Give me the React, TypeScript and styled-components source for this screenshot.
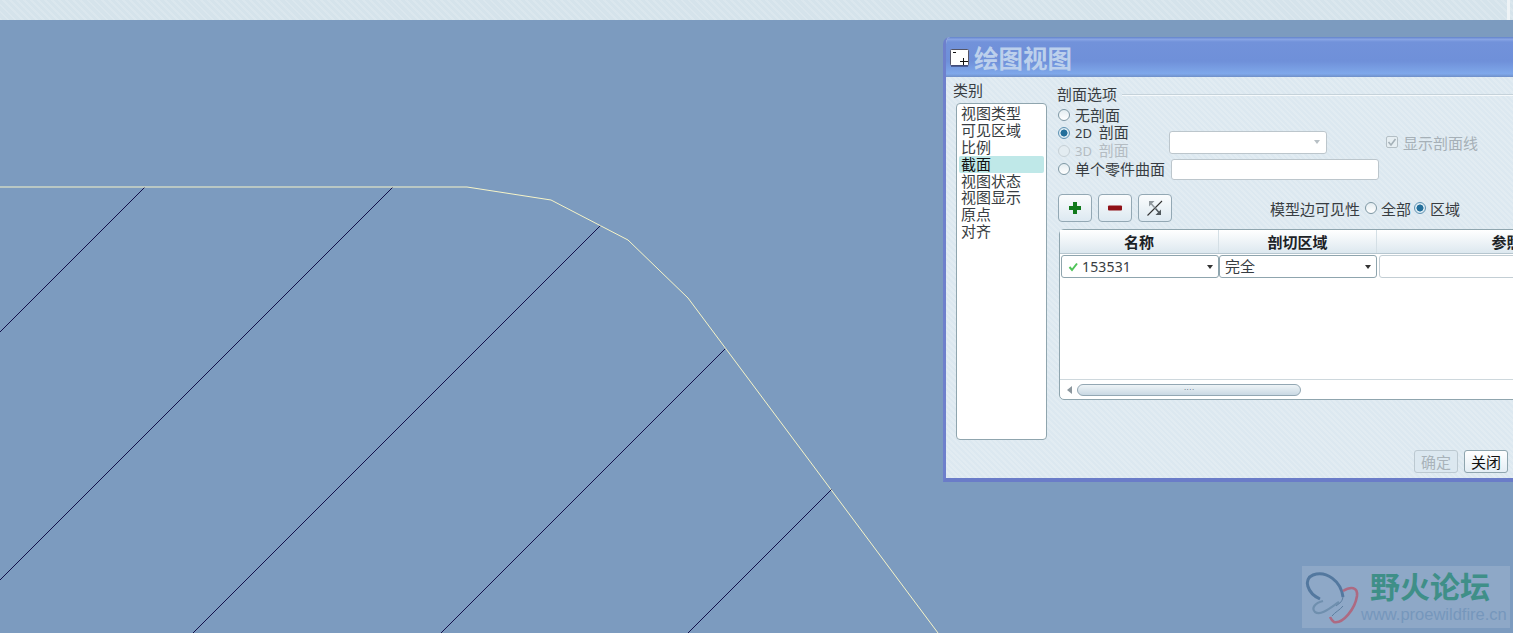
import React from "react";
import styled, { createGlobalStyle } from "styled-components";

const Global = createGlobalStyle`
  html, body { margin: 0; padding: 0; }
  body { font-family: "Noto Sans CJK SC", "Liberation Sans", sans-serif; overflow: hidden; }
  * { box-sizing: border-box; }
`;

const Page = styled.div`
  width: 1513px;
  height: 633px;
  display: flex;
  flex-direction: column;
  overflow: hidden;
  background: #7c9bbf;
`;

const TopBar = styled.div`
  height: 20px;
  flex: none;
  display: flex;
  justify-content: flex-end;
  background-color: #d5e3eb;
  background-image: repeating-linear-gradient(45deg, rgba(255,255,255,.14) 0 2px, transparent 2px 5px);
`;

const TopBarEdge = styled.div`
  width: 3px;
  margin-right: 3px;
  background: #eef3f6;
`;

const Canvas = styled.div`
  position: relative;
  flex: 1;
  overflow: hidden;
`;

const Drawing = styled.svg`
  display: block;
  width: 1513px;
  height: 613px;
`;

const Dialog = styled.div`
  position: absolute;
  left: 943px;
  top: 17px;
  right: 0;
  height: 445px;
  display: flex;
  flex-direction: column;
  overflow: hidden;
  border-left: 3px solid #6e80cc;
  border-bottom: 4px solid #6a7cc8;
  border-top-left-radius: 7px;
  color: #383d42;
  font-size: 15px;
  line-height: 17px;
  background-color: #dce8f0;
  background-image: repeating-linear-gradient(45deg, rgba(255,255,255,.16) 0 2px, transparent 2px 4px);
`;

const TitleBar = styled.div`
  height: 40px;
  flex: none;
  display: flex;
  align-items: center;
  gap: 5px;
  padding-left: 4px;
  background: linear-gradient(#6a8ad0 0, #6a8ad0 1px, #8ba7e6 2px, #7292da 5px, #6f90d9 60%, #7fa8ea 92%, #6f8fc8 100%);
`;

const TitleIcon = styled.svg`
  flex: none;
  margin-bottom: -2px;
`;

const TitleText = styled.span`
  margin-top: 2px;
  color: #bcd0ec;
  font-size: 24.500px;
  font-weight: 700;
  line-height: 30px;
`;

const Body = styled.div`
  flex: 1;
  min-height: 0;
  display: flex;
`;

const CategoryColumn = styled.div`
  flex: none;
  width: 101px;
  padding: 5px 0 0 7px;
`;

const CategoryLabel = styled.div`
  height: 21px;
  line-height: 15px;
`;

const CategoryList = styled.ul`
  list-style: none;
  margin: 0 0 0 3px;
  padding: 1px 2px;
  width: 91px;
  height: 337px;
  background: #fff;
  border: 1px solid #8fa5ae;
  border-radius: 4px;
`;

const CategoryItem = styled.li<{ $selected?: boolean }>`
  height: 16.900px;
  line-height: 15px;
  padding-left: 2px;
  color: ${p => (p.$selected ? "#111" : "#383d42")};
  background: ${p => (p.$selected ? "#bfe8e8" : "transparent")};
  border-radius: 2px;
`;

const Main = styled.div`
  flex: none;
  width: 640px;
  margin-left: 10px;
  padding-top: 9px;
`;

const SectionHeader = styled.div`
  display: flex;
  align-items: center;
  gap: 5px;
  height: 18px;
  margin-bottom: 2px;
  &::after {
    content: "";
    flex: 1;
    height: 2px;
    background: linear-gradient(#c5d2da 50%, #f6fafc 50%);
  }
`;

const SectionLabel = styled.span`
  line-height: 15px;
  margin-bottom: 4px;
`;

const OptionGrid = styled.div`
  display: grid;
  grid-template-columns: 112px 217px auto;
  grid-template-rows: repeat(4, 18px);
`;

const RadioRow = styled.label<{ $disabled?: boolean; $row: number }>`
  grid-column: 1;
  grid-row: ${p => p.$row};
  display: flex;
  align-items: center;
  gap: 5px;
  white-space: pre;
  color: ${p => (p.$disabled ? "#b4bcc2" : "inherit")};
`;

const RowText = styled.span`
  line-height: 15px;
  padding-bottom: 2px;
`;

const Digits = styled.span`
  font-family: "Noto Sans", sans-serif;
  font-size: 13px;
`;

const Radio = styled.span<{ $checked?: boolean; $disabled?: boolean }>`
  flex: none;
  width: 12px;
  height: 12px;
  margin-left: 1px;
  border-radius: 50%;
  border: 1px solid ${p => (p.$checked ? "#5f93b3" : p.$disabled ? "#c6d0d6" : "#7f98a4")};
  background: ${p =>
    p.$checked
      ? "radial-gradient(circle, #236f9b 0 3.200px, #dcebf3 3.800px)"
      : p.$disabled
      ? "#e3ecf1"
      : "linear-gradient(#e4edf1, #fff)"};
`;

const SelectBox = styled.div`
  grid-column: 2;
  grid-row: 2 / 4;
  align-self: center;
  width: 158px;
  height: 23px;
  display: flex;
  align-items: center;
  justify-content: flex-end;
  padding-right: 6px;
  background: #fff;
  border: 1px solid #bcc6cc;
  border-radius: 3px;
`;

const Caret = styled.span<{ $dim?: boolean }>`
  width: 0;
  height: 0;
  border-left: 3.500px solid transparent;
  border-right: 3.500px solid transparent;
  border-top: 4px solid ${p => (p.$dim ? "#b8c0c5" : "#333")};
`;

const CheckLabel = styled.label`
  grid-column: 3;
  grid-row: 2 / 4;
  align-self: center;
  display: flex;
  align-items: center;
  gap: 5px;
  color: #a6b0b7;
  white-space: nowrap;
`;

const CheckBox = styled.span`
  width: 12px;
  height: 12px;
  display: flex;
  align-items: center;
  justify-content: center;
  border: 1px solid #b4bfc5;
  border-radius: 2px;
  background: #e6eef2;
`;

const TextInput = styled.div`
  grid-column: 2 / 4;
  grid-row: 4;
  align-self: center;
  margin-left: 2px;
  width: 208px;
  height: 21px;
  background: #fff;
  border: 1px solid #bcc6cc;
  border-radius: 3px;
`;

const Toolbar = styled.div`
  display: flex;
  align-items: center;
  margin: 16px 0 0 1px;
  height: 28px;
`;

const IconButton = styled.button`
  width: 34px;
  height: 28px;
  padding: 0;
  margin-right: 6px;
  display: flex;
  align-items: center;
  justify-content: center;
  background: linear-gradient(#fafcfd, #dde9f1);
  border: 1px solid #93a8b4;
  border-radius: 4px;
`;

const Visibility = styled.div`
  margin-left: 92px;
  display: flex;
  align-items: center;
  white-space: nowrap;
`;

const VisibilityOption = styled.span`
  display: flex;
  align-items: center;
  gap: 4px;
  margin-left: 4px;
  & + & {
    margin-left: 2px;
  }
`;

const Table = styled.div`
  width: 640px;
  height: 171px;
  margin: 7px 0 0 2px;
  display: flex;
  flex-direction: column;
  background: #fff;
  border: 1px solid #8fa5ae;
  border-radius: 5px;
`;

const TableHeader = styled.div`
  height: 24px;
  flex: none;
  display: grid;
  grid-template-columns: 159px 158px 260px;
  background: linear-gradient(#fff, #dde8ef);
  border-bottom: 1px solid #b6c6cf;
`;

const HeaderCell = styled.div`
  text-align: center;
  font-weight: 700;
  line-height: 23px;
  color: #1c2226;
  border-right: 1px solid #d4dfe5;
`;

const TableBody = styled.div`
  flex: 1;
  display: grid;
  grid-template-columns: 158px 158px 1fr;
  grid-auto-rows: 23px;
  padding: 1px 0 0 1px;
`;

const Dropdown = styled.div`
  display: flex;
  align-items: center;
  gap: 3px;
  height: 23px;
  padding: 0 5px 0 6px;
  background: #fff;
  border: 1px solid #8fa5ae;
  border-radius: 3px;
`;

const DropdownText = styled.span`
  flex: 1;
  line-height: 15px;
  margin-left: -1px;
  padding-bottom: 2px;
`;

const Numeric = styled.span`
  flex: 1;
  line-height: 17px;
  font-family: "Noto Sans", sans-serif;
  font-size: 14px;
  letter-spacing: .15px;
`;

const BlankField = styled.div`
  height: 23px;
  margin-left: 2px;
  border: 1px solid #c3ced4;
  border-radius: 3px;
`;

const ScrollArea = styled.div`
  height: 20px;
  flex: none;
  display: flex;
  align-items: center;
  gap: 5px;
  padding-left: 7px;
  border-top: 1px solid #ced8dd;
`;

const ScrollArrow = styled.span`
  width: 0;
  height: 0;
  border-top: 4px solid transparent;
  border-bottom: 4px solid transparent;
  border-right: 5px solid #8c979e;
`;

const ScrollThumb = styled.div`
  width: 224px;
  height: 12px;
  display: flex;
  align-items: center;
  justify-content: center;
  color: #55636c;
  font-size: 8px;
  line-height: 8px;
  font-family: "Liberation Sans", sans-serif;
  background: linear-gradient(#eef4f7, #c9d8e3);
  border: 1px solid #93a7b3;
  border-radius: 6px;
`;

const Footer = styled.div`
  height: 34px;
  flex: none;
  display: flex;
  justify-content: flex-end;
  gap: 6px;
  padding: 6px 5px 0 0;
`;

const FooterButton = styled.button<{ $disabled?: boolean }>`
  width: 44px;
  height: 23px;
  padding: 0;
  font: inherit;
  font-size: 15px;
  line-height: 19px;
  color: ${p => (p.$disabled ? "#a9b3ba" : "#111")};
  background: ${p => (p.$disabled ? "#dce8f0" : "linear-gradient(#fff, #e4eef5)")};
  border: 1px solid ${p => (p.$disabled ? "#bcc9d1" : "#8fa5ae")};
  border-radius: 3px;
`;

const Watermark = styled.div`
  position: absolute;
  left: 1302px;
  top: 546px;
  width: 208px;
  height: 62px;
  display: flex;
  background: #8ea8c7;
`;

const LogoMark = styled.svg`
  flex: none;
  width: 60px;
  height: 62px;
`;

const WatermarkText = styled.div`
  display: flex;
  flex-direction: column;
  width: 146px;
  white-space: nowrap;
`;

const WatermarkTitle = styled.div`
  height: 38px;
  margin-left: 8px;
  padding-top: 1px;
  color: #3f8f88;
  font-size: 30px;
  font-weight: 700;
  line-height: 36px;
`;

const WatermarkUrl = styled.div`
  margin-left: -1px;
  color: #7697bc;
  font-family: "Liberation Sans", sans-serif;
  font-size: 16.500px;
  line-height: 20px;
`;

const outline = "0,167 467,167 551,180 628,220 688,278 938,613";
const hatches: [number, number, number, number][] = [
  [0, 312, 145, 167],
  [0, 560, 393, 167],
  [193, 613, 601, 205],
  [441, 613, 726, 328],
  [688, 613, 832, 469],
];
const categories = ["视图类型", "可见区域", "比例", "截面", "视图状态", "视图显示", "原点", "对齐"];

export default function App() {
  return (
    <Page>
      <Global />
      <TopBar>
        <TopBarEdge />
      </TopBar>
      <Canvas>
        <Drawing viewBox="0 0 1513 613">
          {hatches.map(([a, b, c, d]) => (
            <line key={a + "-" + b} x1={a} y1={b} x2={c} y2={d} stroke="#12104a" strokeWidth="1" shapeRendering="crispEdges" />
          ))}
          <polyline points={outline} fill="none" stroke="#f6f4c8" strokeWidth="1" />
        </Drawing>

        <Dialog>
          <TitleBar>
            <TitleIcon width="19" height="18" viewBox="0 0 19 18">
              <rect x="0.5" y="0.5" width="18" height="16" rx="1" fill="#fff" stroke="#556" />
              <path d="M3 3.500h3M10 12.500h8M13.500 9v7" stroke="#111" strokeWidth="1" fill="none" />
              <path d="M1 17h17" stroke="#3c4a80" strokeWidth="1.400" />
            </TitleIcon>
            <TitleText>绘图视图</TitleText>
          </TitleBar>
          <Body>
            <CategoryColumn>
              <CategoryLabel>类别</CategoryLabel>
              <CategoryList>
                {categories.map(c => (
                  <CategoryItem key={c} $selected={c === "截面"}>{c}</CategoryItem>
                ))}
              </CategoryList>
            </CategoryColumn>
            <Main>
              <SectionHeader><SectionLabel>剖面选项</SectionLabel></SectionHeader>
              <OptionGrid>
                <RadioRow $row={1}><Radio /><RowText>无剖面</RowText></RadioRow>
                <RadioRow $row={2}><Radio $checked /><RowText><Digits>2D</Digits>  剖面</RowText></RadioRow>
                <RadioRow $row={3} $disabled><Radio $disabled /><RowText><Digits>3D</Digits>  剖面</RowText></RadioRow>
                <RadioRow $row={4}><Radio /><RowText>单个零件曲面</RowText></RadioRow>
                <SelectBox><Caret $dim /></SelectBox>
                <CheckLabel>
                  <CheckBox>
                    <svg width="10" height="10" viewBox="0 0 10 10">
                      <path d="M1.500 5l2.500 3 4.500-6" fill="none" stroke="#a5b1b8" strokeWidth="1.600" />
                    </svg>
                  </CheckBox>
                  显示剖面线
                </CheckLabel>
                <TextInput />
              </OptionGrid>
              <Toolbar>
                <IconButton aria-label="添加">
                  <svg width="14" height="14" viewBox="0 0 14 14">
                    <path d="M7 1v12M1 7h12" stroke="#127a1c" strokeWidth="4" />
                  </svg>
                </IconButton>
                <IconButton aria-label="移除">
                  <svg width="16" height="8" viewBox="0 0 16 8">
                    <rect x="1" y="1.500" width="14" height="5" rx="1" fill="#8f1016" />
                  </svg>
                </IconButton>
                <IconButton aria-label="翻转">
                  <svg width="20" height="20" viewBox="0 0 20 20">
                    <path d="M2.500 17.500L17 3" stroke="#333" strokeWidth="1.100" fill="none" />
                    <path d="M4 3h5.500L4 8.500z" fill="#8f979c" />
                    <path d="M16 17h-5.500L16 11.500z" fill="#50585d" />
                    <path d="M6 5.500L10 10" stroke="#8f979c" strokeWidth="1.500" />
                    <path d="M10.500 10.500L14 14.500" stroke="#50585d" strokeWidth="1.500" />
                  </svg>
                </IconButton>
                <Visibility>
                  模型边可见性
                  <VisibilityOption><Radio />全部</VisibilityOption>
                  <VisibilityOption><Radio $checked />区域</VisibilityOption>
                </Visibility>
              </Toolbar>
              <Table>
                <TableHeader>
                  <HeaderCell>名称</HeaderCell>
                  <HeaderCell>剖切区域</HeaderCell>
                  <HeaderCell>参照</HeaderCell>
                </TableHeader>
                <TableBody>
                  <Dropdown>
                    <svg width="11" height="10" viewBox="0 0 11 10">
                      <path d="M1.500 5l2.500 3 5-6.500" fill="none" stroke="#4fc458" strokeWidth="2" />
                    </svg>
                    <Numeric>153531</Numeric>
                    <Caret />
                  </Dropdown>
                  <Dropdown>
                    <DropdownText>完全</DropdownText>
                    <Caret />
                  </Dropdown>
                  <BlankField />
                </TableBody>
                <ScrollArea>
                  <ScrollArrow />
                  <ScrollThumb>····</ScrollThumb>
                </ScrollArea>
              </Table>
            </Main>
          </Body>
          <Footer>
            <FooterButton $disabled>确定</FooterButton>
            <FooterButton>关闭</FooterButton>
          </Footer>
        </Dialog>

        <Watermark>
          <LogoMark viewBox="0 0 60 62">
            <path d="M18 33C5 27 1 13 11 9 24 4 39 15 41 31" fill="none" stroke="#53789f" strokeWidth="3" />
            <path d="M41 25C49 20 56 21 55 30 53 43 41 58 32 56 30 55 29 53 28 51" fill="none" stroke="#ad6a82" strokeWidth="2.600" />
            <path d="M21 35C13 37 9 42 13 46 19 50 28 42 37 36" fill="none" stroke="#6f8fae" strokeWidth="2.200" />
            <path d="M41 31C40 37 36 38 34 40M30 50C33 46 38 44 41 40" fill="none" stroke="#5d7e9f" strokeWidth="1" />
          </LogoMark>
          <WatermarkText>
            <WatermarkTitle>野火论坛</WatermarkTitle>
            <WatermarkUrl>www.proewildfire.cn</WatermarkUrl>
          </WatermarkText>
        </Watermark>
      </Canvas>
    </Page>
  );
}
